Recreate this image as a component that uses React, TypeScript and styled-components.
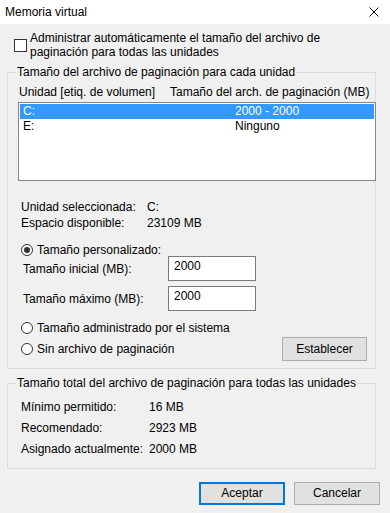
import React from "react";
import styled, { createGlobalStyle } from "styled-components";

const Global = createGlobalStyle`
  html, body { margin: 0; padding: 0; background: #f0f0f0; }
  body {
    font-family: "Liberation Sans", Arial, sans-serif;
    font-size: 12px;
    color: #000;
    width: 390px;
    height: 513px;
    overflow: hidden;
    white-space: nowrap;
  }
  * { box-sizing: border-box; }
`;

const Window = styled.div`
  width: 390px;
  height: 513px;
  display: flex;
  flex-direction: column;
  background: #f0f0f0;
`;

const TitleBar = styled.div`
  height: 24px;
  background: #fff;
  display: flex;
  align-items: center;
  justify-content: space-between;
  padding: 0 11px 0 5px;
  line-height: 16px;
`;

const Body = styled.div`
  display: flex;
  flex-direction: column;
  padding-top: 7px;
`;

const CheckRow = styled.div`
  display: flex;
  align-items: center;
  gap: 3px;
  padding-left: 14px;
`;

const CheckBox = styled.span`
  width: 13px;
  height: 13px;
  border: 1px solid #333;
  background: #fff;
  flex: none;
`;

const CheckText = styled.div`
  line-height: 14px;
`;

const Group = styled.fieldset<{ $top: number; $pt: number; $pb: number }>`
  margin: ${(p) => p.$top}px 0 0 7px;
  width: 369px;
  min-width: 0;
  border: 1px solid #dcdcdc;
  padding: ${(p) => p.$pt}px 0 ${(p) => p.$pb}px 0;
  display: flex;
  flex-direction: column;
`;

const Legend = styled.legend`
  margin-left: 8px;
  padding: 0 1px;
  line-height: 15px;
`;

const HeaderRow = styled.div`
  display: grid;
  grid-template-columns: 151px 1fr;
  padding-left: 11px;
  line-height: 15px;
  margin-top: 5px;
`;

const ListBox = styled.div`
  margin: 2px 0 0 10px;
  width: 358px;
  height: 79px;
  background: #fff;
  border: 1px solid #828790;
  padding: 1px;
  display: flex;
  flex-direction: column;
`;

const ListRow = styled.div<{ $selected?: boolean }>`
  display: grid;
  grid-template-columns: 212px 1fr;
  height: 15px;
  line-height: 15px;
  padding-left: 3px;
  background: ${(p) => (p.$selected ? "#3399ff" : "transparent")};
  color: ${(p) => (p.$selected ? "#fff" : "#000")};
`;

const InfoBlock = styled.div<{ $top: number; $label: number; $h: number; $left: number }>`
  margin-top: ${(p) => p.$top}px;
  padding-left: ${(p) => p.$left}px;
  display: grid;
  grid-template-columns: ${(p) => p.$label}px 1fr;
  grid-auto-rows: ${(p) => p.$h}px;
  align-items: center;
`;

const RadioRow = styled.div<{ $top: number; $h: number }>`
  margin-top: ${(p) => p.$top}px;
  height: ${(p) => p.$h}px;
  padding-left: 13px;
  display: flex;
  align-items: center;
  gap: 4px;
`;

const RadioCircle = styled.span`
  width: 12px;
  height: 12px;
  border-radius: 50%;
  border: 1px solid #333;
  background: #fff;
  flex: none;
  display: flex;
  align-items: center;
  justify-content: center;
`;

const RadioDot = styled.span`
  width: 6px;
  height: 6px;
  border-radius: 50%;
  background: #333;
`;

const FieldRow = styled.div<{ $top: number }>`
  margin-top: ${(p) => p.$top}px;
  display: grid;
  grid-template-columns: 145px 88px;
  align-items: center;
  padding-left: 15px;
`;

const TextBox = styled.div`
  height: 25px;
  width: 88px;
  background: #fff;
  border: 1px solid #7a7a7a;
  padding: 2px 5px;
  line-height: 15px;
`;

const LastRow = styled.div`
  margin-top: 1px;
  display: flex;
  align-items: center;
  justify-content: space-between;
  padding-right: 8px;
`;

const Button = styled.div<{ $w: number; $h: number; $default?: boolean }>`
  width: ${(p) => p.$w}px;
  height: ${(p) => p.$h}px;
  background: #e1e1e1;
  border: ${(p) => (p.$default ? "2px solid #0078d7" : "1px solid #adadad")};
  display: flex;
  align-items: center;
  justify-content: center;
  line-height: 15px;
`;

const Footer = styled.div`
  margin-top: 13px;
  display: flex;
  justify-content: flex-end;
  gap: 9px;
  padding-right: 10px;
`;

const CloseIcon = () => (
  <svg width="10" height="10" viewBox="0 0 10 10">
    <path d="M0.5 0.5 L9.5 9.5 M9.5 0.5 L0.5 9.5" stroke="#000" strokeWidth="1" fill="none" />
  </svg>
);

const Radio = ({ checked }: { checked?: boolean }) => (
  <RadioCircle>{checked && <RadioDot />}</RadioCircle>
);

export default function App() {
  return (
    <Window>
      <Global />
      <TitleBar>
        <span>Memoria virtual</span>
        <CloseIcon />
      </TitleBar>
      <Body>
        <CheckRow>
          <CheckBox />
          <CheckText>
            Administrar automáticamente el tamaño del archivo de
            <br />
            paginación para todas las unidades
          </CheckText>
        </CheckRow>

        <Group $top={6} $pt={0} $pb={7}>
          <Legend>Tamaño del archivo de paginación para cada unidad</Legend>
          <HeaderRow>
            <span>Unidad [etiq. de volumen]</span>
            <span>Tamaño del arch. de paginación (MB)</span>
          </HeaderRow>
          <ListBox>
            <ListRow $selected>
              <span>C:</span>
              <span>2000 - 2000</span>
            </ListRow>
            <ListRow>
              <span>E:</span>
              <span>Ninguno</span>
            </ListRow>
          </ListBox>

          <InfoBlock $top={18} $label={126} $h={16} $left={13}>
            <span>Unidad seleccionada:</span>
            <span>C:</span>
            <span>Espacio disponible:</span>
            <span>23109 MB</span>
          </InfoBlock>

          <RadioRow $top={13} $h={12}>
            <Radio checked />
            <span>Tamaño personalizado:</span>
          </RadioRow>
          <FieldRow $top={0}>
            <span>Tamaño inicial (MB):</span>
            <TextBox>2000</TextBox>
          </FieldRow>
          <FieldRow $top={5}>
            <span>Tamaño máximo (MB):</span>
            <TextBox>2000</TextBox>
          </FieldRow>
          <RadioRow $top={9} $h={16}>
            <Radio />
            <span>Tamaño administrado por el sistema</span>
          </RadioRow>
          <LastRow>
            <RadioRow $top={0} $h={24}>
              <Radio />
              <span>Sin archivo de paginación</span>
            </RadioRow>
            <Button $w={85} $h={24}>
              Establecer
            </Button>
          </LastRow>
        </Group>

        <Group $top={7} $pt={5} $pb={9}>
          <Legend>Tamaño total del archivo de paginación para todas las unidades</Legend>
          <InfoBlock $top={0} $label={128} $h={21} $left={13}>
            <span>Mínimo permitido:</span>
            <span>16 MB</span>
            <span>Recomendado:</span>
            <span>2923 MB</span>
            <span>Asignado actualmente:</span>
            <span>2000 MB</span>
          </InfoBlock>
        </Group>

        <Footer>
          <Button $w={86} $h={23} $default>
            Aceptar
          </Button>
          <Button $w={86} $h={23}>
            Cancelar
          </Button>
        </Footer>
      </Body>
    </Window>
  );
}
